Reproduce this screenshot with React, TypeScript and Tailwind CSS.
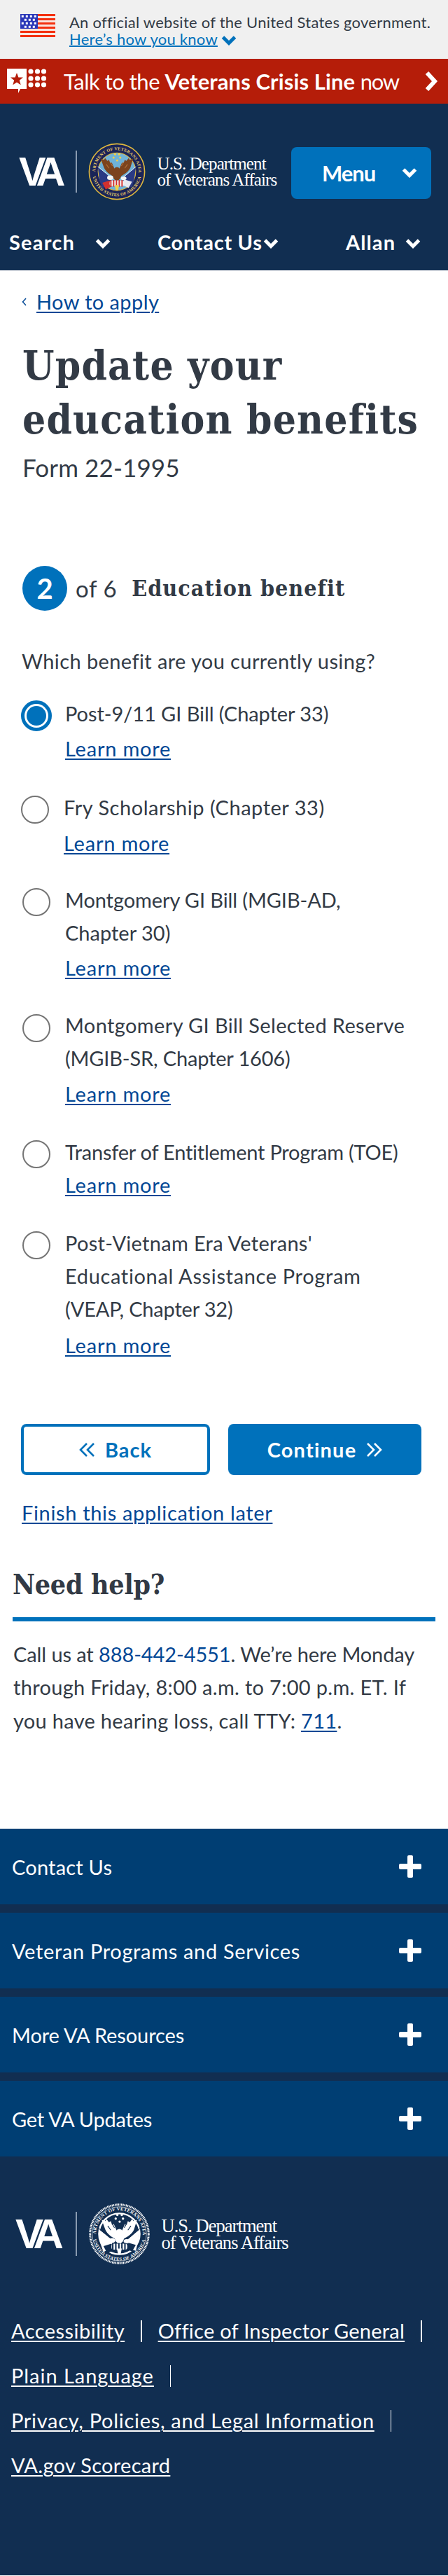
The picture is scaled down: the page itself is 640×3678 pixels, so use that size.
import React from "react";

const serif = "font-['DejaVu_Serif_Condensed','DejaVu_Serif',serif] font-bold";
const link = "text-[#004795] underline decoration-2 underline-offset-[3px]";

function Chevron({ className = "", color = "#fff", sw = 5 }: { className?: string; color?: string; sw?: number }) {
  return (
    <svg viewBox="0 0 22 14" className={className} fill="none">
      <polyline points="2.5,2 11,10.5 19.5,2" stroke={color} strokeWidth={sw} />
    </svg>
  );
}

function Double({ dir, color }: { dir: "left" | "right"; color: string }) {
  const pts = dir === "left" ? ["11,2 2,11 11,20", "21,2 12,11 21,20"] : ["2,2 11,11 2,20", "12,2 21,11 12,20"];
  return (
    <svg viewBox="0 0 23 22" className="w-[23px] h-[22px]" fill="none">
      <polyline points={pts[0]} stroke={color} strokeWidth={2.6} />
      <polyline points={pts[1]} stroke={color} strokeWidth={2.6} />
    </svg>
  );
}

function Flag() {
  const dots: number[][] = [];
  [3, 8, 13, 18].forEach((y, r) => {
    for (let i = 0; i < (r % 2 ? 3 : 4); i++) dots.push([(r % 2 ? 7 : 3) + i * 6, y]);
  });
  return (
    <svg viewBox="0 0 50 33" className="w-[50px] h-[33px] shrink-0">
      <rect width="50" height="33" fill="#f9e6e0" />
      {[0, 6, 12, 18, 24, 30].map((y) => (
        <rect key={y} y={y} width="50" height="3" fill="#f3300f" />
      ))}
      <rect width="25" height="21" fill="#2a37b8" />
      {dots.map(([x, y]) => (
        <rect key={`${x}-${y}`} x={x - 1.2} y={y - 1.2} width="3" height="3" fill="#fff" />
      ))}
    </svg>
  );
}

function CrisisIcon() {
  return (
    <svg viewBox="0 0 57 36" className="w-[57px] h-[36px] shrink-0">
      <path d="M0 0H28V29H19L16 35V29H0Z" fill="#fff" />
      <polygon
        points="14,6 16.4,12.4 23,12.6 17.8,16.8 19.7,23.2 14,19.5 8.3,23.2 10.2,16.8 5,12.6 11.6,12.4"
        fill="#b51d09"
      />
      {[4, 14, 23].map((y) =>
        [34, 43.5, 52.5].map((x) => <circle key={`${x}-${y}`} cx={x} cy={y} r="3.6" fill="#fff" />),
      )}
    </svg>
  );
}

function Seal({ mono, className }: { mono?: boolean; className: string }) {
  const c = mono
    ? { rim: "#fff", band: "#112e51", text: "#fff", disc: "#112e51", ring: "#fff", wing: "#fff", wing2: "#112e51", flag: "#fff", red: "#112e51", head: "#fff", star: "#fff" }
    : { rim: "#e0b93e", band: "#1a2458", text: "#f0d268", disc: "#6fb2d8", ring: "#e0b93e", wing: "#7c431d", wing2: "#b5743a", flag: "#2a3a84", red: "#d2302e", head: "#f6f6f4", star: "#f1cf4c" };
  const id = mono ? "m" : "c";
  return (
    <svg viewBox="0 0 100 100" className={`overflow-visible ${className}`}>
      <circle cx="50" cy="50" r={mono ? 48 : 49.5} fill={c.band} stroke={c.rim} strokeWidth={mono ? 3.4 : 2} strokeDasharray={mono ? "1.6 1" : undefined} />
      {mono && <circle cx="50" cy="50" r="44.5" fill="none" stroke="#fff" strokeWidth="0.7" />}
      <circle cx="50" cy="50" r="33.5" fill={c.disc} stroke={c.ring} strokeWidth={mono ? 2.6 : 1.4} />
      <defs>
        <path id={`${id}t`} d="M11.5 50A38.5 38.5 0 0 1 88.5 50" />
        <path id={`${id}b`} d="M6 50A44 44 0 0 0 94 50" />
      </defs>
      <text fontFamily="Liberation Serif" fontWeight="700" fontSize="7.6" fill={c.text} letterSpacing="0.35">
        <textPath href={`#${id}t`} startOffset="50%" textAnchor="middle">
          DEPARTMENT OF VETERANS AFFAIRS
        </textPath>
      </text>
      <text fontFamily="Liberation Serif" fontWeight="700" fontSize="7.6" fill={c.text} letterSpacing="0.35">
        <textPath href={`#${id}b`} startOffset="50%" textAnchor="middle">
          UNITED STATES OF AMERICA
        </textPath>
      </text>
      {[[46.7, 19], [54, 19], [44, 25], [56, 25], [50.5, 30]].map(([x, y]) => (
        <circle key={`${x}-${y}`} cx={x} cy={y} r="1.9" fill={c.star} />
      ))}
      <polygon points="16,42 41,62 34,74 24,80 19,66" fill={c.flag} />
      <polygon points="84,42 60,62 66,74 77,78 81,62" fill={c.flag} />
      <polygon points="24,70 37,66 42,76 30,82" fill={c.red} />
      <polygon points="77,68 63,64 60,74 71,79" fill={mono ? "#112e51" : "#e8e8ee"} />
      <line x1="16" y1="41" x2="44" y2="64" stroke={mono ? "#112e51" : "#e9f1f6"} strokeWidth="1.2" />
      <line x1="84" y1="41" x2="57" y2="64" stroke={mono ? "#112e51" : "#e9f1f6"} strokeWidth="1.2" />
      <path d="M47 60C38 56 30 50 27 43L21 27L27 29L29 26L33 31L36 29L38 35L41 34L47 48Z" fill={c.wing} />
      <path d="M53 60C62 56 71 50 74 43L79 27L73 29L71 26L67 31L64 29L62 35L59 34L53 48Z" fill={c.wing} />
      <path d="M42 40L38 33M36 44L31 37M58 40L62 33M64 44L69 37" stroke={c.wing2} strokeWidth="1.3" fill="none" />
      <ellipse cx="50" cy="54" rx="8" ry="12" fill={c.wing} />
      <ellipse cx="38" cy="61" rx="5.5" ry="4" fill={c.head} />
      <ellipse cx="62" cy="62" rx="5" ry="3.4" fill={c.head} />
      <rect x="37" y="66" width="26" height="10" rx="4" fill={mono ? "#fff" : "#f4f4f4"} />
      {[38, 43, 48, 53, 58].map((x) => (
        <rect key={x} x={x} y="65" width="2.4" height="12" fill={c.red} />
      ))}
      <polygon points="46,74 54,74 52,84 48,84" fill={c.star} />
    </svg>
  );
}

function Plus() {
  return (
    <svg viewBox="0 0 32 32" className="w-[32px] h-[32px]">
      <rect x="12" y="0" width="8" height="32" rx="2" fill="#fff" />
      <rect x="0" y="12" width="32" height="8" rx="2" fill="#fff" />
    </svg>
  );
}

const options = [
  {
    lines: [["Post-9/11 GI Bill (Chapter 33)", "tracking-[-0.07px]"]],
    top: "mt-[28px]", left: "ml-[30px]", textLeft: "ml-[19px]", radio: "mt-[5px]", learn: "mt-[3px]", checked: true,
  },
  {
    lines: [["Fry Scholarship (Chapter 33)", "tracking-[0.52px]"]],
    top: "mt-[37px]", left: "ml-[30px]", textLeft: "ml-[21px]", radio: "mt-[7px]", learn: "mt-[4px]",
  },
  {
    lines: [["Montgomery GI Bill (MGIB-AD,", "tracking-[-0.1px]"], ["Chapter 30)", "tracking-[0px]"]],
    top: "mt-[34px]", left: "ml-[32px]", textLeft: "ml-[21px]", radio: "mt-[7px]", learn: "mt-[3px]",
  },
  {
    lines: [["Montgomery GI Bill Selected Reserve", "tracking-[0.37px]"], ["(MGIB-SR, Chapter 1606)", "tracking-[-0.17px]"]],
    top: "mt-[35px]", left: "ml-[32px]", textLeft: "ml-[21px]", radio: "mt-[8px]", learn: "mt-[4px]",
  },
  {
    lines: [["Transfer of Entitlement Program (TOE)", "tracking-[-0.24px]"]],
    top: "mt-[36px]", left: "ml-[32px]", textLeft: "ml-[21px]", radio: "mt-[7px]", learn: "mt-0",
  },
  {
    lines: [
      ["Post-Vietnam Era Veterans'", "tracking-[0.3px]"],
      ["Educational Assistance Program", "tracking-[0.65px]"],
      ["(VEAP, Chapter 32)", "tracking-[-0.2px]"],
    ],
    top: "mt-[36px]", left: "ml-[32px]", textLeft: "ml-[21px]", radio: "mt-[7px]", learn: "mt-[5px]",
  },
];

const footerRows = [
  ["Contact Us", "tracking-[0.2px]"],
  ["Veteran Programs and Services", "tracking-[0.66px]"],
  ["More VA Resources", "tracking-[-0.1px]"],
  ["Get VA Updates", "tracking-[-0.2px]"],
];

const footerLinks = [
  ["Accessibility", "tracking-[0.46px]"],
  ["Office of Inspector General", "tracking-[0.26px]"],
  ["Plain Language", "tracking-[0.96px]"],
  ["Privacy, Policies, and Legal Information", "tracking-[0.7px]"],
  ["VA.gov Scorecard", "tracking-[0.3px]"],
];

export default function App() {
  return (
    <div className="w-[640px] bg-white font-['Lato',sans-serif] text-[29px] leading-[47px] text-[#323a45]">
      {/* gov banner */}
      <div className="h-[84px] bg-[#f0f0f0] flex pl-[29px] pt-[20px]">
        <Flag />
        <div className="ml-[20px] text-[22px] leading-[24px] tracking-[0.25px]">
          <div className="whitespace-nowrap">An official website of the United States government.</div>
          <div className="flex items-center">
            <span className="text-[#0071bb] underline decoration-2">Here’s how you know</span>
            <Chevron className="w-[22px] h-[14px] ml-[5px] mt-[4px]" color="#0071bb" />
          </div>
        </div>
      </div>

      {/* crisis line */}
      <div className="h-[64px] bg-[#b51d09] flex items-center pl-[10px] text-white">
        <CrisisIcon />
        <div className="ml-[24px] text-[31px] whitespace-nowrap tracking-[-0.5px]">
          Talk to the <b className="tracking-[0.1px]">Veterans Crisis Line</b> <span className="tracking-[-1.2px]">now</span>
        </div>
        <svg viewBox="0 0 20 30" className="w-[20px] h-[30px] ml-auto mr-[13px]" fill="none">
          <polyline points="3,3 14,15 3,27" stroke="#fff" strokeWidth="6" />
        </svg>
      </div>

      {/* header */}
      <header className="h-[238px] bg-[#112e51] text-white">
        <div className="flex items-center pt-[57px] pl-[27px]">
          <span className="w-[81px] font-['Liberation_Sans',sans-serif] font-bold text-[58px] leading-[80px] tracking-[-10px]">VA</span>
          <span className="w-[1.5px] h-[60px] bg-[#8a9bb0]" />
          <Seal className="w-[80px] h-[80px] ml-[17px]" />
          <div className="ml-[18px] font-['Liberation_Serif',serif] text-[25px] leading-[23px] tracking-[-0.9px]">
            <div>U.S. Department</div>
            <div>of Veterans Affairs</div>
          </div>
          <button className="ml-auto mr-[24px] mt-[4px] w-[200px] h-[74px] rounded-[8px] bg-[#0071bb] flex items-center justify-between pl-[44px] pr-[20px] font-bold text-[31px] tracking-[-1px]">
            Menu
            <Chevron className="w-[22px] h-[14px]" />
          </button>
        </div>
        <div className="flex font-bold mt-[37px]">
          <div className="w-[145px] ml-[13px] flex items-center justify-between tracking-[1.2px]">
            Search <Chevron className="w-[22px] h-[14px] mt-[4px]" />
          </div>
          <div className="w-[173px] ml-[67px] flex items-center justify-between tracking-[0.7px]">
            Contact Us <Chevron className="w-[22px] h-[14px] mt-[4px]" />
          </div>
          <div className="w-[107px] ml-[96px] flex items-center justify-between tracking-[1.1px]">
            Allan <Chevron className="w-[22px] h-[14px] mt-[4px]" />
          </div>
        </div>
      </header>

      <main>
        <div className="mt-[21px] pl-[31px] flex items-center">
          <svg viewBox="0 0 7 12" className="w-[7px] h-[12px]" fill="none">
            <polyline points="6,1 1.5,6 6,11" stroke="#004795" strokeWidth="1.5" />
          </svg>
          <a className={`ml-[14px] tracking-[0.4px] ${link}`}>How to apply</a>
        </div>

        <h1 className={`mt-[30px] pl-[32px] text-[58px] leading-[77px] tracking-[1.2px] ${serif}`}>
          Update your
          <br />
          education benefits
        </h1>
        <div className="mt-[6px] pl-[32px] text-[35px] tracking-[0.1px]">Form 22-1995</div>

        <div className="mt-[117px] pl-[32px] flex items-center h-[64px]">
          <span className="w-[64px] h-[64px] rounded-full bg-[#0071bb] text-white font-bold text-[40px] flex items-center justify-center">2</span>
          <span className="ml-[12px] text-[33px] tracking-[0.6px]">of 6</span>
          <span className={`ml-[21px] text-[32px] tracking-[1px] ${serif}`}>Education benefit</span>
        </div>

        <div className="mt-[48px] pl-[31px] tracking-[0.4px]">Which benefit are you currently using?</div>

        {options.map((o) => (
          <div key={o.lines[0][0]} className={`flex ${o.top} ${o.left}`}>
            {o.checked ? (
              <span className={`${o.radio} w-[44px] h-[44px] shrink-0 rounded-full border-[5px] border-[#0071bb] p-[3px]`}>
                <span className="block w-full h-full rounded-full bg-[#0071bb]" />
              </span>
            ) : (
              <span className={`${o.radio} w-[40px] h-[40px] shrink-0 rounded-full border-2 border-[#757575]`} />
            )}
            <div className={o.textLeft}>
              {o.lines.map(([l, t]) => (
                <div key={l} className={`whitespace-nowrap ${t}`}>{l}</div>
              ))}
              <a className={`block w-fit tracking-[0.78px] ${o.learn} ${link}`}>Learn more</a>
            </div>
          </div>
        ))}

        <div className="mt-[89px] ml-[30px] flex gap-[26px] font-bold">
          <button className="w-[270px] h-[73px] rounded-[8px] border-[4px] border-[#0071bb] text-[#0071bb] flex items-center justify-center gap-[14px] tracking-[1px]">
            <Double dir="left" color="#0071bb" />
            Back
          </button>
          <button className="w-[276px] h-[73px] rounded-[8px] bg-[#0071bb] text-white flex items-center justify-center gap-[14px] tracking-[1.2px]">
            Continue
            <Double dir="right" color="#fff" />
          </button>
        </div>

        <div className="mt-[30px] pl-[31px]">
          <a className={`tracking-[0.65px] ${link}`}>Finish this application later</a>
        </div>

        <aside className="mx-[18px]">
          <h2 className={`mt-[54px] text-[39px] leading-[50px] tracking-[-0.27px] ${serif}`}>Need help?</h2>
          <div className="mt-[22px] h-[6px] bg-[#0071bb]" />
          <div className="mt-[23px] pl-[1px] leading-[47.4px]">
            <div className="tracking-[-0.1px]">
              Call us at <a className="text-[#004795]">888-442-4551</a>. We’re here Monday
            </div>
            <div className="tracking-[0.3px]">through Friday, 8:00 a.m. to 7:00 p.m. ET. If</div>
            <div className="tracking-[0.3px]">
              you have hearing loss, call TTY: <a className={link}>711</a>.
            </div>
          </div>
        </aside>
      </main>

      <footer className="mt-[131px] bg-[#112e51] text-white pb-[125px]">
        <div className="flex flex-col gap-[12px]">
          {footerRows.map(([t, s]) => (
            <div key={t} className={`h-[108px] bg-[#003e73] flex items-center justify-between pl-[17px] pr-[38px] ${s}`}>
              {t}
              <Plus />
            </div>
          ))}
        </div>

        <div className="mt-[67px] flex items-center pl-[22px]">
          <span className="w-[86px] font-['Liberation_Sans',sans-serif] font-bold text-[60px] leading-[87px] tracking-[-10px]">VA</span>
          <span className="w-[1.5px] h-[63px] bg-[#8a9bb0]" />
          <Seal mono className="w-[87px] h-[87px] ml-[17px]" />
          <div className="ml-[17px] font-['Liberation_Serif',serif] text-[26.5px] leading-[24px] tracking-[-0.95px]">
            <div>U.S. Department</div>
            <div>of Veterans Affairs</div>
          </div>
        </div>

        <div className="mt-[63px] pl-[16px] flex flex-wrap leading-[64px]">
          {footerLinks.map(([l, s], i) => (
            <span key={l} className="flex items-center whitespace-nowrap">
              <a className={`underline decoration-2 underline-offset-[3px] ${s}`}>{l}</a>
              {i < footerLinks.length - 1 && <span className="mx-[23px] w-[1.5px] h-[31px] bg-white" />}
            </span>
          ))}
        </div>
      </footer>
    </div>
  );
}
